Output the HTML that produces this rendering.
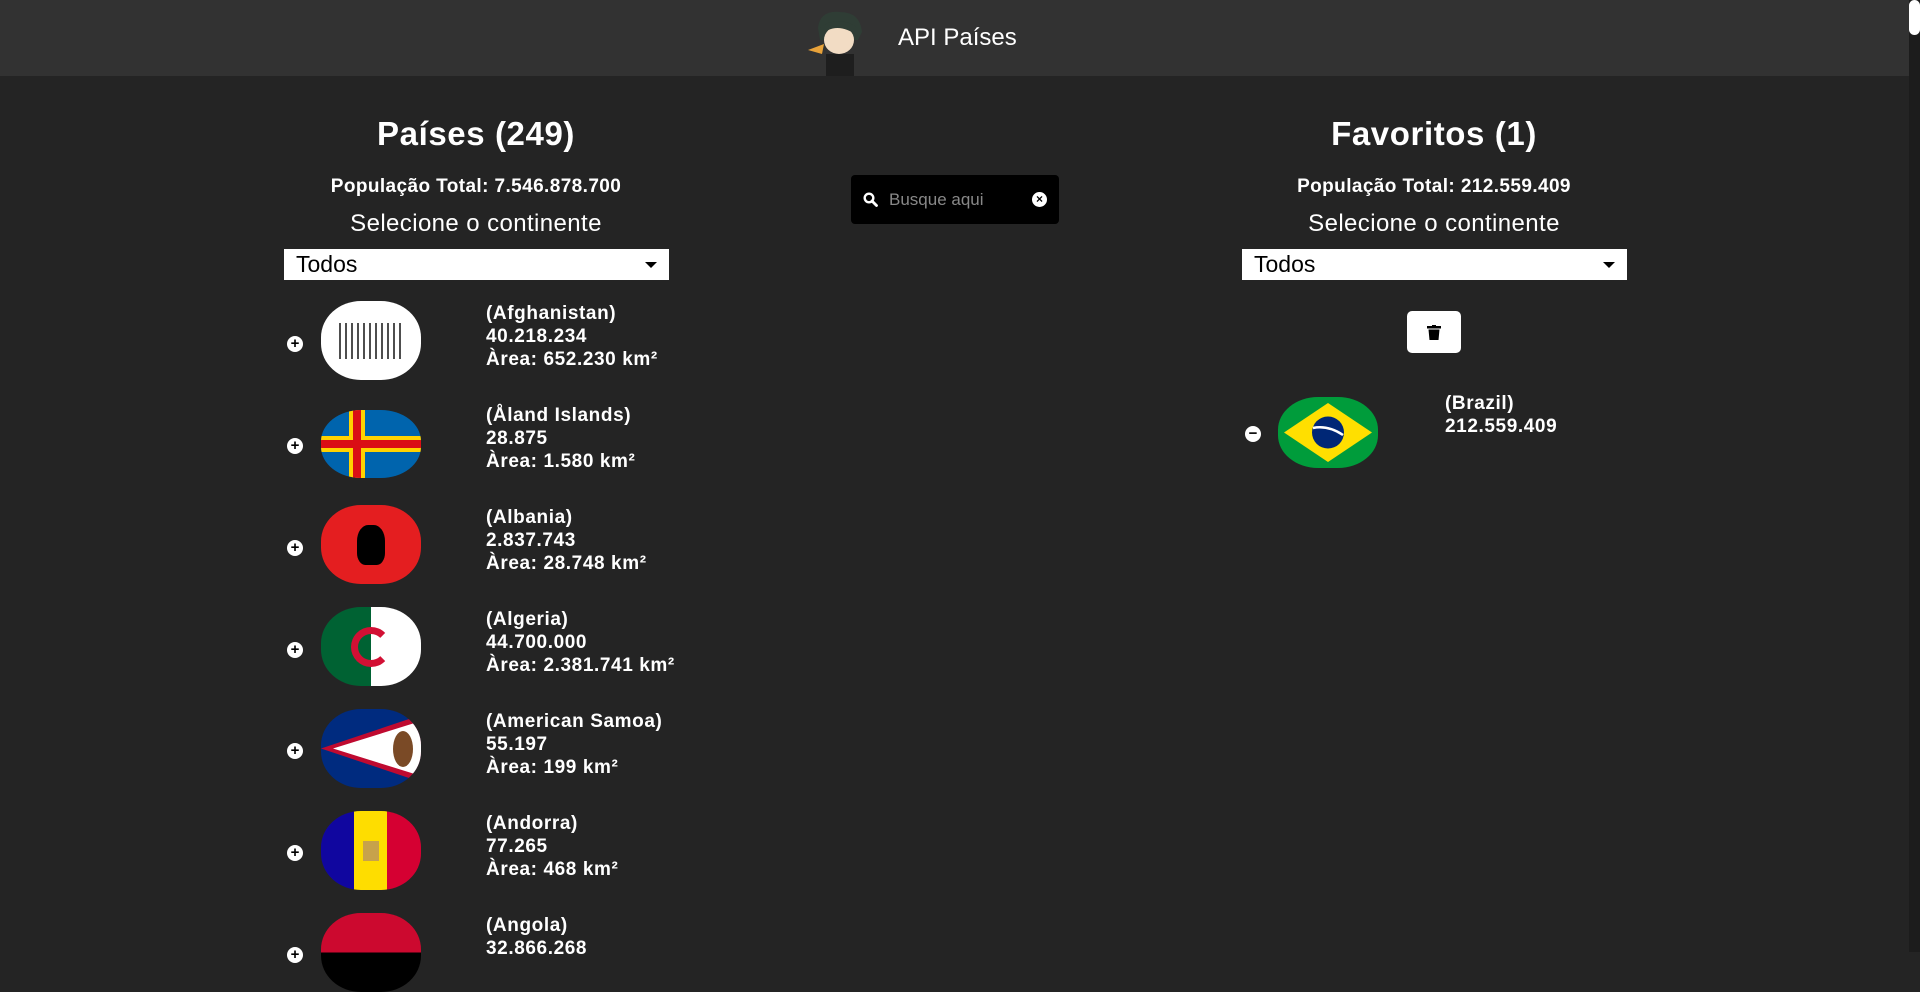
<!DOCTYPE html>
<html><head><meta charset="utf-8"><style>
*{box-sizing:border-box;margin:0;padding:0}
body{width:1920px;height:952px;overflow:hidden;background:#242424;font-family:"Liberation Sans",sans-serif;color:#fff;position:relative}
.hdr{position:absolute;left:0;top:0;width:1909px;height:76px;background:#323232}
.sb{position:absolute;right:0;top:0;width:11px;height:952px;background:#1c1c1c}
.sb i{position:absolute;left:0;top:0;width:11px;height:35px;background:#fff;border-radius:6px}
.t{position:absolute;white-space:nowrap}
.c{transform:translateX(-50%)}
h1{font-size:33px;font-weight:bold;letter-spacing:.6px}
.pop{font-size:19px;font-weight:bold;letter-spacing:.4px}
.sel{font-size:24px;letter-spacing:.4px}
.box{position:absolute;background:#fff;color:#000;font-size:23px;padding-left:12px;line-height:31px}
.box:after{content:"";position:absolute;right:12px;top:13px;border:6px solid transparent;border-top:6px solid #000}
.flag{position:absolute;width:100px;height:79px;border-radius:40%/46%;overflow:hidden}
.pl{position:absolute;width:16px;height:16px;border-radius:50%;background:#fff;color:#000;font-size:15px;font-weight:bold;line-height:16px;text-align:center}
.info{position:absolute;font-size:19px;font-weight:bold;line-height:23px;letter-spacing:.6px}
</style></head><body>
<div class="hdr"></div>
<div class="sb"><i></i></div>
<svg class="t" style="left:806px;top:6px" width="64" height="70" viewBox="0 0 64 70">
<path d="M12 22 Q14 4 34 6 Q54 6 56 26 L52 34 L14 34Z" fill="#2f3d35"/>
<ellipse cx="33" cy="34" rx="15" ry="14" fill="#f2dcc4"/>
<path d="M14 30 Q30 14 52 30 L52 22 Q32 8 14 22Z" fill="#2f3d35"/>
<rect x="20" y="48" width="28" height="22" fill="#1e1e1e"/>
<path d="M2 44 L18 38 L16 48Z" fill="#e8a23a"/>
</svg>
<div class="t" style="left:898px;top:24px;font-size:24px">API Países</div>

<div class="t c" style="left:476px;top:115px"><h1>Países (249)</h1></div>
<div class="t c pop" style="left:476px;top:176px">População Total: 7.546.878.700</div>
<div class="t c sel" style="left:476px;top:210px">Selecione o continente</div>
<div class="box" style="left:284px;top:249px;width:385px;height:31px">Todos</div>

<div class="t" style="left:851px;top:175px;width:208px;height:49px;background:#000;border-radius:4px">
<svg style="position:absolute;left:12px;top:17px" width="15" height="15" viewBox="0 0 15 15"><circle cx="6" cy="6" r="4.3" fill="none" stroke="#fff" stroke-width="2.4"/><path d="M9 9 L13.5 13.5" stroke="#fff" stroke-width="2.8" stroke-linecap="round"/></svg>
<div style="position:absolute;left:38px;top:15px;font-size:17px;color:#888">Busque aqui</div>
<div style="position:absolute;left:181px;top:17px;width:15px;height:15px;border-radius:50%;background:#fff;color:#000;font-size:12px;font-weight:bold;line-height:15px;text-align:center">×</div>
</div>

<div class="t c" style="left:1434px;top:115px"><h1>Favoritos (1)</h1></div>
<div class="t c pop" style="left:1434px;top:176px">População Total: 212.559.409</div>
<div class="t c sel" style="left:1434px;top:210px">Selecione o continente</div>
<div class="box" style="left:1242px;top:249px;width:385px;height:31px">Todos</div>
<div class="t" style="left:1407px;top:311px;width:54px;height:42px;background:#fff;border-radius:5px">
<svg style="position:absolute;left:20px;top:14px" width="14" height="15" viewBox="0 0 14 15"><rect x="0" y="1" width="14" height="2.5" fill="#000"/><rect x="5" y="0" width="4" height="2" fill="#000"/><path d="M1.5 4.5 H12.5 L11.5 15 H2.5Z" fill="#000"/></svg>
</div>

<div class="pl" style="left:287px;top:336px">+</div>
<div class="flag" style="left:321px;top:301px;background:#fff"><div style="position:absolute;left:18px;top:22px;width:64px;height:36px;background:repeating-linear-gradient(90deg,#222 0 2px,transparent 2px 6px);opacity:.8"></div></div>
<div class="info" style="left:486px;top:302px">(Afghanistan)<br>40.218.234<br>Àrea: 652.230 km²</div>

<div class="pl" style="left:287px;top:438px">+</div>
<div class="flag" style="left:321px;top:410px;height:68px;background:#0064ad">
<div style="position:absolute;left:0;top:26px;width:100px;height:16px;background:#ffd200"></div>
<div style="position:absolute;left:28px;top:0;width:16px;height:68px;background:#ffd200"></div>
<div style="position:absolute;left:0;top:30px;width:100px;height:8px;background:#da0e15"></div>
<div style="position:absolute;left:32px;top:0;width:8px;height:68px;background:#da0e15"></div></div>
<div class="info" style="left:486px;top:404px">(Åland Islands)<br>28.875<br>Àrea: 1.580 km²</div>

<div class="pl" style="left:287px;top:540px">+</div>
<div class="flag" style="left:321px;top:505px;background:#e41e20"><div style="position:absolute;left:36px;top:20px;width:28px;height:40px;background:#000;border-radius:40% 40% 30% 30%"></div></div>
<div class="info" style="left:486px;top:506px">(Albania)<br>2.837.743<br>Àrea: 28.748 km²</div>

<div class="pl" style="left:287px;top:642px">+</div>
<div class="flag" style="left:321px;top:607px;background:linear-gradient(90deg,#006233 50%,#fff 50%)"><div style="position:absolute;left:30px;top:20px;width:40px;height:40px;border-radius:50%;border:7px solid #d21034;border-right-color:transparent"></div></div>
<div class="info" style="left:486px;top:608px">(Algeria)<br>44.700.000<br>Àrea: 2.381.741 km²</div>

<div class="pl" style="left:287px;top:743px">+</div>
<div class="flag" style="left:321px;top:709px;background:#002b7f"><svg width="100" height="79"><polygon points="0,39.5 100,6 100,73" fill="#bf0a30"/><polygon points="12,39.5 100,12 100,67" fill="#fff"/><ellipse cx="82" cy="40" rx="10" ry="18" fill="#7a4a26"/></svg></div>
<div class="info" style="left:486px;top:710px">(American Samoa)<br>55.197<br>Àrea: 199 km²</div>

<div class="pl" style="left:287px;top:845px">+</div>
<div class="flag" style="left:321px;top:811px;background:linear-gradient(90deg,#10069f 33%,#fedd00 33% 66%,#d50032 66%)"><div style="position:absolute;left:42px;top:30px;width:16px;height:20px;background:#c7a24b"></div></div>
<div class="info" style="left:486px;top:812px">(Andorra)<br>77.265<br>Àrea: 468 km²</div>

<div class="pl" style="left:287px;top:947px">+</div>
<div class="flag" style="left:321px;top:913px;background:linear-gradient(#cc092f 50%,#000 50%)"></div>
<div class="info" style="left:486px;top:914px">(Angola)<br>32.866.268</div>

<div class="pl" style="left:1245px;top:426px">−</div>
<div class="flag" style="left:1278px;top:397px;height:71px;background:#009c3b"><svg width="100" height="71"><polygon points="50,6 94,35.5 50,65 6,35.5" fill="#ffdf00"/><circle cx="50" cy="35.5" r="16" fill="#002776"/><path d="M35 31 Q50 28 65 38" stroke="#fff" stroke-width="2.5" fill="none"/></svg></div>
<div class="info" style="left:1445px;top:392px">(Brazil)<br>212.559.409</div>
</body></html>
